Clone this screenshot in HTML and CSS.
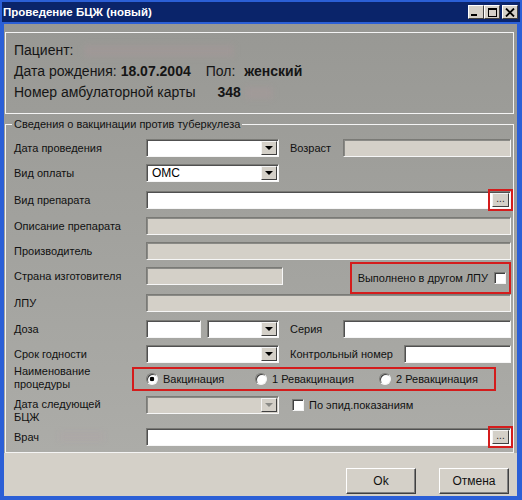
FILE: index.html
```html
<!DOCTYPE html>
<html lang="ru">
<head>
<meta charset="utf-8">
<title>Проведение БЦЖ (новый)</title>
<link rel="stylesheet" href="styles.css">
</head>
<body>
<div class="window">
  <div class="titlebar">
    <span class="title">Проведение БЦЖ (новый)</span>
    <div class="tbtns">
      <div class="tbtn"><span class="g-min"></span></div>
      <div class="tbtn"><span class="g-max"></span></div>
      <div class="tbtn close">
        <svg width="10" height="9" viewBox="0 0 10 9"><path d="M1 0.5 L9 8.5 M9 0.5 L1 8.5" stroke="#000" stroke-width="1.8"/></svg>
      </div>
    </div>
  </div>
  <div class="client">
    <div class="main">
      <div class="info">
        <div class="info-row">Пациент:<span class="smudge s1"></span></div>
        <div class="info-row">Дата рождения: <b class="dob">18.07.2004</b><span class="sex-lbl">Пол:</span><b>женский</b></div>
        <div class="info-row">Номер амбулаторной карты<b class="card">348</b><span class="smudge s2"></span></div>
      </div>
      <fieldset class="vac">
        <legend>Сведения о вакцинации против туберкулеза</legend>
        <div class="rows">
          <div class="row">
            <span class="lbl">Дата проведения</span>
            <div class="field select w133"><span class="val"></span><span class="dd"><span class="tri"></span></span></div>
            <span class="side w53">Возраст</span>
            <div class="field ro grow"></div>
          </div>
          <div class="row">
            <span class="lbl">Вид оплаты</span>
            <div class="field select w133"><span class="val">ОМС</span><span class="dd"><span class="tri"></span></span></div>
          </div>
          <div class="row mt2">
            <span class="lbl">Вид препарата</span>
            <div class="field grow pick"><span class="dots">...</span></div>
          </div>
          <div class="row mt1">
            <span class="lbl">Описание препарата</span>
            <div class="field ro grow"></div>
          </div>
          <div class="row">
            <span class="lbl">Производитель</span>
            <div class="field ro grow"></div>
          </div>
          <div class="row">
            <span class="lbl">Страна изготовителя</span>
            <div class="field ro w137"></div>
            <div class="flag">
              <span>Выполнено в другом ЛПУ</span>
              <span class="check"></span>
            </div>
          </div>
          <div class="row mt2">
            <span class="lbl">ЛПУ</span>
            <div class="field ro grow"></div>
          </div>
          <div class="row mt1">
            <span class="lbl">Доза</span>
            <div class="field w55"></div>
            <div class="field select w72 ml6"><span class="val"></span><span class="dd"><span class="tri"></span></span></div>
            <span class="side w53">Серия</span>
            <div class="field grow"></div>
          </div>
          <div class="row">
            <span class="lbl">Срок годности</span>
            <div class="field select w133"><span class="val"></span><span class="dd"><span class="tri"></span></span></div>
            <span class="side w114">Контрольный номер</span>
            <div class="field grow"></div>
          </div>
          <div class="row">
            <span class="lbl two up">Наименование<br>процедуры</span>
            <div class="radios">
              <label class="opt o1"><span class="radio on"></span>Вакцинация</label>
              <label class="opt o2"><span class="radio"></span>1 Ревакцинация</label>
              <label class="opt"><span class="radio"></span>2 Ревакцинация</label>
            </div>
          </div>
          <div class="row mt1">
            <span class="lbl two down">Дата следующей<br>БЦЖ</span>
            <div class="field select ro w133"><span class="val"></span><span class="dd off"><span class="tri"></span></span></div>
            <span class="check ml13"></span>
            <span class="chk-lbl">По эпид.показаниям</span>
          </div>
          <div class="row mt7">
            <span class="lbl">Врач<span class="smudge s3"></span></span>
            <div class="field grow pick"><span class="dots">...</span></div>
          </div>
        </div>
      </fieldset>
    </div>
    <div class="footer">
      <button class="btn">Ok</button>
      <button class="btn">Отмена</button>
    </div>
  </div>
</div>
</body>
</html>
```

FILE: styles.css
```css
* { box-sizing: border-box; }
html, body { margin: 0; padding: 0; }
body {
  font-family: "Liberation Sans", Arial, sans-serif;
  background: #2b5fd6;
  color: #000;
}
.window {
  width: 522px;
  height: 500px;
  background: #2b5fd6;
  padding: 2px 5px 4px 4px;
  display: flex;
  flex-direction: column;
}
.titlebar {
  height: 20px;
  margin: 0 -3px 2px -2px;
  background: #0a246a;
  display: flex;
  align-items: center;
  justify-content: space-between;
  padding: 0 2px 0 1px;
}
.title {
  color: #fff;
  font-weight: bold;
  font-size: 11.5px;
}
.tbtns { display: flex; }
.tbtn {
  width: 16px;
  height: 14px;
  background: #d4d0c8;
  border: 1px solid;
  border-color: #fff #404040 #404040 #fff;
  display: flex;
  align-items: center;
  justify-content: center;
}
.tbtn.close { margin-left: 2px; }
.g-min {
  width: 6px;
  height: 2px;
  background: #000;
  align-self: flex-end;
  margin: 0 4px 2px 0;
}
.g-max {
  width: 9px;
  height: 9px;
  border: 1px solid #000;
  border-top-width: 2px;
}
.client {
  flex: 1;
  display: flex;
  flex-direction: column;
  background: #d4d0c8;
}
.main {
  flex: 1;
  display: flex;
  flex-direction: column;
  background: linear-gradient(#989894, #acaca8);
  padding: 8px 3px 0 1px;
}
.info {
  height: 82px;
  border: 1px solid #f4f4f4;
  padding: 7px 8px 0;
  font-size: 14px;
  line-height: 21px;
  color: #151515;
}
.info-row { display: flex; align-items: center; white-space: nowrap; }
.dob { margin-left: 4px; }
.sex-lbl { margin: 0 9px 0 15px; }
.card { margin-left: 22px; }
.smudge {
  display: inline-block;
  height: 12px;
  background: rgba(200, 150, 165, 0.14);
  filter: blur(3px);
}
.s1 { width: 150px; margin-left: 10px; }
.s2 { width: 28px; margin-left: 4px; }
.s3 { width: 45px; margin-left: 20px; height: 9px; background: rgba(200, 150, 165, 0.1); }
.vac {
  flex: 1;
  margin: 3px 0 0;
  border: 1px solid #f4f4f4;
  padding: 0 2px 0 8px;
  min-width: 0;
}
.vac legend {
  font-size: 11px;
  line-height: 14px;
  padding: 0 2px;
  margin-left: -2px;
  color: #111;
}
.rows {
  display: flex;
  flex-direction: column;
  gap: 7px;
  margin-top: 8px;
}
.row {
  display: flex;
  align-items: center;
  height: 18px;
  font-size: 11px;
}
.mt1 { margin-top: 1px; }
.mt2 { margin-top: 2px; }
.mt7 { margin-top: 7px; }
.lbl {
  width: 132px;
  flex: none;
  white-space: nowrap;
  color: #111;
}
.lbl.two { line-height: 13px; }
.lbl.up { margin-top: -3px; }
.lbl.down { margin-top: 12px; }
.side { flex: none; margin-left: 11px; white-space: nowrap; color: #111; }
.w53 { width: 53px; }
.w114 { width: 114px; }
.field {
  height: 18px;
  background: #fff;
  border: 1px solid;
  border-color: #7a7a76 #f6f6f6 #f6f6f6 #7a7a76;
  box-shadow: inset 1px 1px 0 #505050;
  flex: none;
}
.field.ro { background: #d4d0c8; box-shadow: inset 1px 1px 0 #8a8a86; }
.grow { flex: 1; }
.w133 { width: 133px; }
.w137 { width: 137px; }
.w55 { width: 55px; }
.w72 { width: 72px; }
.ml6 { margin-left: 6px; }
.ml13 { margin-left: 13px; }
.select {
  display: flex;
  align-items: center;
  justify-content: space-between;
  padding: 1px 1px 1px 2px;
  font-size: 12px;
}
.val { padding-left: 3px; }
.dd {
  width: 16px;
  height: 14px;
  background: #d4d0c8;
  border: 1px solid;
  border-color: #f4f4f4 #404040 #404040 #f4f4f4;
  display: flex;
  align-items: center;
  justify-content: center;
}
.tri {
  width: 0;
  height: 0;
  border-left: 4px solid transparent;
  border-right: 4px solid transparent;
  border-top: 4px solid #000;
}
.dd.off .tri { border-top-color: #8a8a86; }
.pick {
  display: flex;
  align-items: center;
  justify-content: flex-end;
  padding-right: 1px;
}
.dots {
  width: 17px;
  height: 14px;
  background: #d4d0c8;
  border: 1px solid;
  border-color: #f4f4f4 #404040 #404040 #f4f4f4;
  font-size: 10px;
  line-height: 9px;
  text-align: center;
  color: #222;
  outline: 2px solid #d41c1c;
  outline-offset: 2px;
}
.flag {
  margin-left: auto;
  width: 161px;
  height: 32px;
  flex: none;
  border: 2px solid #d41c1c;
  display: flex;
  align-items: center;
  justify-content: flex-end;
  gap: 6px;
  padding-right: 3px;
  font-size: 11px;
  color: #111;
  margin-top: 4px;
}
.check {
  width: 12px;
  height: 12px;
  flex: none;
  background: #fff;
  border: 1px solid;
  border-color: #7a7a76 #f4f4f4 #f4f4f4 #7a7a76;
  box-shadow: inset 1px 1px 0 #404040;
}
.chk-lbl { margin-left: 5px; font-size: 11px; color: #111; }
.radios {
  margin-left: -14px;
  width: 364px;
  height: 24px;
  flex: none;
  border: 2px solid #d41c1c;
  display: flex;
  align-items: center;
  padding-left: 12px;
  font-size: 11px;
  color: #111;
}
.opt { display: flex; align-items: center; gap: 5px; white-space: nowrap; }
.o1 { width: 109px; }
.o2 { width: 124px; }
.radio {
  width: 12px;
  height: 12px;
  border-radius: 50%;
  background: #fff;
  border: 1px solid;
  border-color: #7a7a76 #f4f4f4 #f4f4f4 #7a7a76;
  box-shadow: inset 1px 1px 0 #404040;
}
.radio.on { background: radial-gradient(circle, #000 0 2px, #fff 2.6px); }
.footer {
  height: 43px;
  flex: none;
  display: flex;
  justify-content: flex-end;
  align-items: flex-end;
  gap: 23px;
  padding: 0 8px 2px 0;
}
.btn {
  width: 70px;
  height: 26px;
  background: #d4d0c8;
  border: 1px solid;
  border-color: #fff #404040 #404040 #fff;
  box-shadow: inset -1px -1px 0 #808080;
  font-family: "Liberation Sans", Arial, sans-serif;
  font-size: 12px;
  color: #111;
  padding: 0;
}
```
